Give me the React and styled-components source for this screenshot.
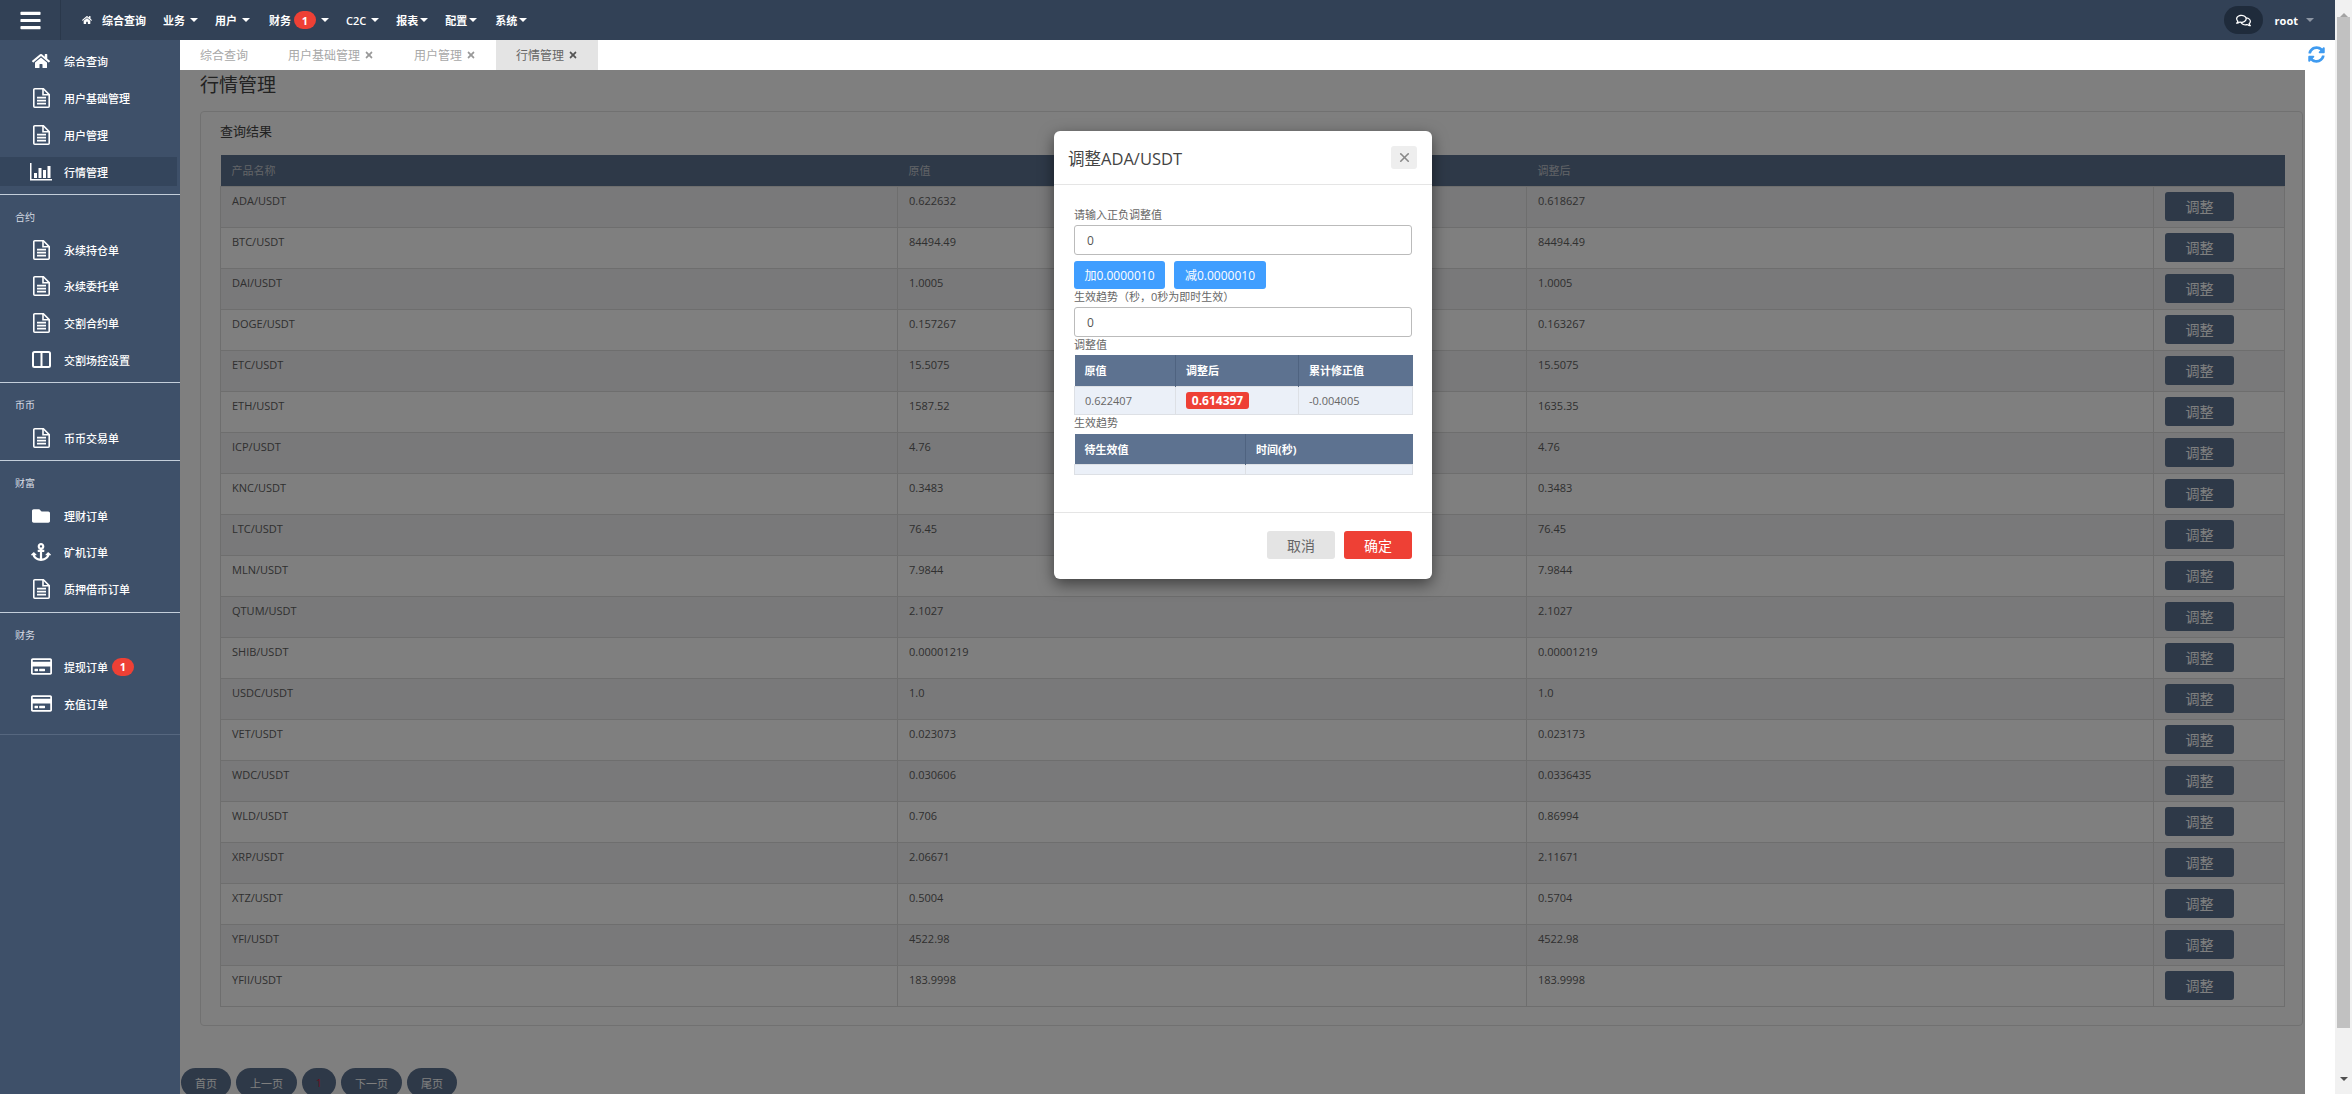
import styled, { createGlobalStyle } from "styled-components";
import { X } from "lucide-react";
import {
  FaAnchor,
  FaBars,
  FaFolder,
  FaHome,
  FaRegComments,
  FaRegCreditCard,
  FaSyncAlt,
  FaTimes,
} from "react-icons/fa";

const FONT = `"Open Sans", "Noto Sans CJK SC", sans-serif`;

const GlobalStyle = createGlobalStyle`
  html, body {
    margin: 0;
    height: 100%;
    overflow: hidden;
    background: #fff;
    font-family: ${FONT};
  }
  * { box-sizing: border-box; }
`;

// file-text outline, wider than the one in the icon package
const FileIcon = () => (
  <svg width="17" height="20" viewBox="0 0 17 20" fill="none" stroke="currentColor" strokeWidth="1.6">
    <path d="M1.8 .8h8.6l5.8 5.8v11.6a1 1 0 0 1-1 1H1.8a1 1 0 0 1-1-1V1.8a1 1 0 0 1 1-1z" />
    <path d="M10 1v5.8h6" />
    <path d="M4 9.6h9M4 12.6h9M4 15.6h9" />
  </svg>
);

const BarsIcon = () => (
  <svg width="22" height="18" viewBox="0 0 22 18" fill="currentColor">
    <path d="M0 0h1.500v16H22v1.500H0z" />
    <path d="M4 10h3v5H4zM8.500 5h3v10h-3zM13 7h3v8h-3zM17.500 3h3v12h-3z" />
  </svg>
);

const ColumnsIcon = () => (
  <svg width="19" height="17" viewBox="0 0 19 17" fill="none" stroke="currentColor" strokeWidth="2">
    <rect x="1" y="1" width="17" height="15" rx="1.500" />
    <path d="M9.500 1v15" />
  </svg>
);

const menuGroups = [
  {
    items: [
      { icon: <FaHome size={18} />, text: "综合查询" },
      { icon: <FileIcon />, text: "用户基础管理" },
      { icon: <FileIcon />, text: "用户管理" },
      { icon: <BarsIcon />, text: "行情管理", active: true },
    ],
  },
  {
    title: "合约",
    items: [
      { icon: <FileIcon />, text: "永续持仓单" },
      { icon: <FileIcon />, text: "永续委托单" },
      { icon: <FileIcon />, text: "交割合约单" },
      { icon: <ColumnsIcon />, text: "交割场控设置" },
    ],
  },
  { title: "币币", items: [{ icon: <FileIcon />, text: "币币交易单" }] },
  {
    title: "财富",
    items: [
      { icon: <FaFolder size={18} />, text: "理财订单" },
      { icon: <FaAnchor size={20} />, text: "矿机订单" },
      { icon: <FileIcon />, text: "质押借币订单" },
    ],
  },
  {
    title: "财务",
    last: true,
    items: [
      { icon: <FaRegCreditCard size={21} />, text: "提现订单", badge: "1" },
      { icon: <FaRegCreditCard size={21} />, text: "充值订单" },
    ],
  },
];

const rows = [
  ["ADA/USDT", "0.622632", "0.618627"],
  ["BTC/USDT", "84494.49", "84494.49"],
  ["DAI/USDT", "1.0005", "1.0005"],
  ["DOGE/USDT", "0.157267", "0.163267"],
  ["ETC/USDT", "15.5075", "15.5075"],
  ["ETH/USDT", "1587.52", "1635.35"],
  ["ICP/USDT", "4.76", "4.76"],
  ["KNC/USDT", "0.3483", "0.3483"],
  ["LTC/USDT", "76.45", "76.45"],
  ["MLN/USDT", "7.9844", "7.9844"],
  ["QTUM/USDT", "2.1027", "2.1027"],
  ["SHIB/USDT", "0.00001219", "0.00001219"],
  ["USDC/USDT", "1.0", "1.0"],
  ["VET/USDT", "0.023073", "0.023173"],
  ["WDC/USDT", "0.030606", "0.0336435"],
  ["WLD/USDT", "0.706", "0.86994"],
  ["XRP/USDT", "2.06671", "2.11671"],
  ["XTZ/USDT", "0.5004", "0.5704"],
  ["YFI/USDT", "4522.98", "4522.98"],
  ["YFII/USDT", "183.9998", "183.9998"],
];

const Page = styled.div`
  display: flex;
  flex-direction: column;
  width: 2352px;
  height: 1094px;
  padding-right: 17px;
  position: relative;
  overflow: hidden;
`;

const Header = styled.header`
  display: flex;
  align-items: center;
  height: 40px;
  flex-shrink: 0;
  background: #324156;
  color: #fff;
`;

const Burger = styled.div`
  display: flex;
  align-items: center;
  justify-content: center;
  width: 61px;
  height: 100%;
  border-right: 1px solid #2a384b;
  font-size: 23px;
`;

const Nav = styled.nav`
  display: flex;
  align-items: center;
  flex: 1;
  padding-left: 21px;
  font-size: 11px;
  font-weight: 600;
`;

const NavItem = styled.span`
  display: flex;
  align-items: center;
  margin-right: ${(p) => p.$space || 17}px;
  white-space: nowrap;
`;

const HomeMark = styled(FaHome)`
  font-size: 10px;
  margin-right: 10px;
`;

const Caret = styled.i`
  width: 0;
  height: 0;
  margin-left: ${(p) => p.$gap || 5}px;
  border-left: 4px solid transparent;
  border-right: 4px solid transparent;
  border-top: 4px solid ${(p) => p.$color || "#fff"};
`;

const Badge = styled.span`
  display: inline-flex;
  align-items: center;
  justify-content: center;
  width: 22px;
  height: 18px;
  margin-left: ${(p) => p.$left || 3}px;
  border-radius: 9px;
  background: #ee4035;
  color: #fff;
  font-size: 11px;
  font-weight: 700;
  position: relative;
`;

const UserArea = styled.div`
  display: flex;
  align-items: center;
  padding-right: 21px;
  font-size: 11px;
  font-weight: 700;
`;

const ChatPill = styled.span`
  display: flex;
  align-items: center;
  justify-content: center;
  width: 39px;
  height: 28px;
  margin-right: 12px;
  border-radius: 14px;
  background: #1f2b3b;
  font-size: 15px;
`;

const Body = styled.div`
  display: flex;
  flex: 1;
  min-height: 0;
`;

const Sidebar = styled.aside`
  width: 180px;
  flex-shrink: 0;
  background: #3e5069;
  color: #fff;
`;

const MenuGroup = styled.div`
  padding-top: ${(p) => (p.$first ? 3 : 0)}px;
  padding-bottom: ${(p) => (p.$last ? 12 : 4)}px;
  border-bottom: 1px solid ${(p) => (p.$last ? "#56677f" : "#c3ceda")};
`;

const GroupTitle = styled.div`
  height: 36px;
  padding: 14px 0 6px 15px;
  font-size: 10px;
  line-height: 16px;
  color: #d5dbe3;
`;

const MenuRow = styled.div`
  display: flex;
  align-items: center;
  height: 36.8px;
  position: relative;
  font-size: 11px;
  font-weight: 500;

  &::before {
    content: "";
    display: ${(p) => (p.$active ? "block" : "none")};
    position: absolute;
    left: 0;
    right: 3px;
    top: 4px;
    bottom: 4px;
    background: #34455c;
  }
`;

const MenuIcon = styled.span`
  display: flex;
  align-items: center;
  justify-content: center;
  width: 64px;
  padding-left: 18px;
  position: relative;
`;

const MenuText = styled.span`
  position: relative;
`;

const Main = styled.main`
  display: flex;
  flex-direction: column;
  flex: 1;
  min-width: 0;
`;

const TabBar = styled.div`
  display: flex;
  height: 30px;
  flex-shrink: 0;
  background: #fff;
  position: relative;
`;

const Tab = styled.div`
  display: flex;
  align-items: center;
  gap: 4px;
  padding: 0 20px;
  font-size: 12px;
  color: ${(p) => (p.$active ? "#666" : "#a8a8a8")};
  background: ${(p) => (p.$active ? "#e4e4e4" : "#fff")};
`;

const TabClose = styled(FaTimes)`
  font-size: 10px;
  color: ${(p) => (p.$active ? "#555" : "#999")};
`;

const Refresh = styled(FaSyncAlt)`
  position: absolute;
  right: 10px;
  top: 6px;
  font-size: 17px;
  color: #3f9bf0;
`;

const Workspace = styled.div`
  flex: 1;
  display: flex;
  min-height: 0;
`;

const Content = styled.section`
  flex: 1;
  min-width: 0;
  position: relative;
  overflow: hidden;
  padding: 0 2px 0 20px;
  background: #fff;
`;

const RightGutter = styled.div`
  width: 30px;
  flex-shrink: 0;
  background: #fff;
`;

const PageTitle = styled.h1`
  margin: 0;
  height: 41px;
  padding-top: 1px;
  font-size: 19px;
  font-weight: 400;
  line-height: 28px;
  color: #444;
`;

const Panel = styled.div`
  height: 915px;
  padding: 0 19px;
  border: 1px solid #e2e2e2;
  border-radius: 4px;
`;

const PanelTitle = styled.div`
  height: 43px;
  padding-top: 10px;
  font-size: 13px;
  line-height: 18px;
  color: #444;
`;

const DataTable = styled.table`
  width: 2064px;
  table-layout: fixed;
  border-collapse: collapse;
  font-size: 11px;
`;

const DataHead = styled.th`
  height: 31px;
  padding: 0 11px;
  text-align: left;
  font-weight: 400;
  color: #c4c8cf;
  background: #5d7290;
`;

const DataRow = styled.tr`
  background: ${(p) => (p.$odd ? "#f2f2f4" : "#ffffff")};
`;

const DataCell = styled.td`
  height: 41px;
  padding: 6px 11px 0;
  vertical-align: top;
  line-height: 15px;
  color: #606060;
  border: 1px solid #dcdcdc;
`;

const ActionCell = styled(DataCell)`
  padding: 5px 0 0 11px;
`;

const AdjustButton = styled.button`
  display: block;
  width: 69px;
  height: 29px;
  padding: 0;
  border: 0;
  border-radius: 3px;
  background: #5d7290;
  color: #fff;
  font: 14px ${FONT};
`;

const Pager = styled.div`
  display: flex;
  gap: 5px;
  margin: 42px 0 0 -19px;
`;

const PagerButton = styled.button`
  width: ${(p) => p.$w}px;
  height: 29px;
  padding: 0;
  border: 0;
  border-radius: 15px;
  background: #5d7290;
  color: ${(p) => (p.$current ? "#c81e3c" : "#fff")};
  font: 11px ${FONT};
`;

const Backdrop = styled.div`
  position: absolute;
  left: 180px;
  top: 70px;
  width: 2125px;
  height: 1024px;
  background: rgba(0, 0, 0, 0.5);
`;

const Modal = styled.div`
  position: absolute;
  left: 1054px;
  top: 131px;
  width: 378px;
  height: 448px;
  display: flex;
  flex-direction: column;
  border-radius: 6px;
  background: #fff;
  box-shadow: 0 5px 15px rgba(0, 0, 0, 0.5);
`;

const ModalHeader = styled.div`
  display: flex;
  align-items: center;
  justify-content: space-between;
  height: 54px;
  flex-shrink: 0;
  padding: 0 15px 0 14px;
  border-bottom: 1px solid #e5e5e5;
`;

const ModalTitle = styled.h4`
  margin: 0;
  font-size: 16.5px;
  font-weight: 400;
  color: #444;
`;

const CloseButton = styled.button`
  display: flex;
  align-items: center;
  justify-content: center;
  width: 26px;
  height: 23px;
  padding: 0;
  border: 0;
  border-radius: 3px;
  background: #eee;
  color: #888;
`;

const ModalBody = styled.div`
  height: 328px;
  flex-shrink: 0;
  padding: 22px 20px 0;
  border-bottom: 1px solid #e5e5e5;
`;

const FieldLabel = styled.div`
  height: ${(p) => p.$h || 18}px;
  font-size: 11px;
  line-height: 16px;
  color: #666;
`;

const ValueInput = styled.input`
  display: block;
  width: 100%;
  height: 30px;
  padding: 0 12px;
  border: 1px solid #bbb;
  border-radius: 3px;
  color: #555;
  background: #fff;
  font: 12px ${FONT};
`;

const StepRow = styled.div`
  display: flex;
  gap: 9px;
  margin-top: 6px;
`;

const StepButton = styled.button`
  width: ${(p) => p.$w}px;
  height: 28px;
  padding: 0;
  border: 0;
  border-radius: 3px;
  background: #409eff;
  color: #fff;
  font: 12px ${FONT};
`;

const MiniTable = styled.table`
  width: 338px;
  table-layout: fixed;
  border-collapse: collapse;
  font-size: 11px;
`;

const MiniHead = styled.th`
  height: 31px;
  padding: 0 10px;
  text-align: left;
  font-weight: 700;
  color: #fff;
  background: #5d7290;
  border-left: 1px solid #4f6380;

  &:first-child {
    border-left: 0;
  }
`;

const MiniCell = styled.td`
  height: ${(p) => p.$h}px;
  padding: 0 10px;
  color: #666;
  background: #ebf0f8;
  border: 1px solid #dde0e5;
`;

const RedTag = styled.span`
  display: inline-block;
  width: 63px;
  height: 17px;
  line-height: 17px;
  text-align: center;
  border-radius: 3px;
  background: #ee4035;
  color: #fff;
  font-size: 12px;
  font-weight: 700;
`;

const ModalFooter = styled.div`
  display: flex;
  justify-content: flex-end;
  gap: 9px;
  padding: 18px 20px 0;
`;

const FooterButton = styled.button`
  width: 68px;
  height: 28px;
  padding: 0;
  border: 0;
  border-radius: 3px;
  background: ${(p) => (p.$primary ? "#ee4035" : "#e4e4e4")};
  color: ${(p) => (p.$primary ? "#fff" : "#666")};
  font: 14px ${FONT};
`;

const Scrollbar = styled.div`
  position: absolute;
  right: 0;
  top: 0;
  bottom: 0;
  width: 17px;
  display: flex;
  flex-direction: column;
  align-items: center;
  background: #f1f1f1;
`;

const ScrollArrow = styled.i`
  height: 17px;
  width: 0;
  flex-shrink: 0;
  border-left: 4px solid transparent;
  border-right: 4px solid transparent;
  border-bottom: 4px solid ${(p) => (p.$down ? "transparent" : "#a3a3a3")};
  border-top: 4px solid ${(p) => (p.$down ? "#505050" : "transparent")};
  margin-top: ${(p) => (p.$down ? "auto" : 0)};
  background-clip: padding-box;
`;

const ScrollThumb = styled.div`
  width: 13px;
  height: 1011px;
  background: #c1c1c1;
`;

const App = () => {
  return (
    <Page>
      <GlobalStyle />
      <Header>
        <Burger>
          <FaBars />
        </Burger>
        <Nav>
          <NavItem>
            <HomeMark />
            综合查询
          </NavItem>
          <NavItem>
            业务
            <Caret />
          </NavItem>
          <NavItem $space={19}>
            用户
            <Caret />
          </NavItem>
          <NavItem>
            财务
            <Badge>1</Badge>
            <Caret />
          </NavItem>
          <NavItem>
            C2C
            <Caret />
          </NavItem>
          <NavItem>
            报表
            <Caret $gap={2} />
          </NavItem>
          <NavItem $space={18}>
            配置
            <Caret $gap={2} />
          </NavItem>
          <NavItem>
            系统
            <Caret $gap={2} />
          </NavItem>
        </Nav>
        <UserArea>
          <ChatPill>
            <FaRegComments />
          </ChatPill>
          root
          <Caret $color="#8d96a3" $gap={8} />
        </UserArea>
      </Header>
      <Body>
        <Sidebar>
          {menuGroups.map((group, i) => (
            <MenuGroup key={i} $first={i === 0} $last={group.last}>
              {group.title && <GroupTitle>{group.title}</GroupTitle>}
              {group.items.map((item) => (
                <MenuRow key={item.text} $active={item.active}>
                  <MenuIcon>{item.icon}</MenuIcon>
                  <MenuText>{item.text}</MenuText>
                  {item.badge && <Badge $left={4}>{item.badge}</Badge>}
                </MenuRow>
              ))}
            </MenuGroup>
          ))}
        </Sidebar>
        <Main>
          <TabBar>
            <Tab>综合查询</Tab>
            <Tab>
              用户基础管理
              <TabClose />
            </Tab>
            <Tab>
              用户管理
              <TabClose />
            </Tab>
            <Tab $active>
              行情管理
              <TabClose $active />
            </Tab>
            <Refresh />
          </TabBar>
          <Workspace>
            <Content>
              <PageTitle>行情管理</PageTitle>
              <Panel>
                <PanelTitle>查询结果</PanelTitle>
                <DataTable>
                  <colgroup>
                    <col width="677" />
                    <col width="629" />
                    <col width="627" />
                    <col width="131" />
                  </colgroup>
                  <thead>
                    <tr>
                      <DataHead>产品名称</DataHead>
                      <DataHead>原值</DataHead>
                      <DataHead>调整后</DataHead>
                      <DataHead />
                    </tr>
                  </thead>
                  <tbody>
                    {rows.map((row, i) => (
                      <DataRow key={row[0]} $odd={i % 2 === 0}>
                        <DataCell>{row[0]}</DataCell>
                        <DataCell>{row[1]}</DataCell>
                        <DataCell>{row[2]}</DataCell>
                        <ActionCell>
                          <AdjustButton>调整</AdjustButton>
                        </ActionCell>
                      </DataRow>
                    ))}
                  </tbody>
                </DataTable>
              </Panel>
              <Pager>
                <PagerButton $w={50}>首页</PagerButton>
                <PagerButton $w={61}>上一页</PagerButton>
                <PagerButton $w={34} $current>
                  1
                </PagerButton>
                <PagerButton $w={61}>下一页</PagerButton>
                <PagerButton $w={50}>尾页</PagerButton>
              </Pager>
            </Content>
            <RightGutter />
          </Workspace>
        </Main>
      </Body>
      <Backdrop />
      <Modal>
        <ModalHeader>
          <ModalTitle>调整ADA/USDT</ModalTitle>
          <CloseButton>
            <X size={15} strokeWidth={2.6} />
          </CloseButton>
        </ModalHeader>
        <ModalBody>
          <FieldLabel>请输入正负调整值</FieldLabel>
          <ValueInput defaultValue="0" />
          <StepRow>
            <StepButton $w={91}>加0.0000010</StepButton>
            <StepButton $w={92}>减0.0000010</StepButton>
          </StepRow>
          <FieldLabel>生效趋势（秒，0秒为即时生效）</FieldLabel>
          <ValueInput defaultValue="0" />
          <FieldLabel $h={18}>调整值</FieldLabel>
          <MiniTable>
            <colgroup>
              <col width="101" />
              <col width="123" />
              <col width="114" />
            </colgroup>
            <thead>
              <tr>
                <MiniHead>原值</MiniHead>
                <MiniHead>调整后</MiniHead>
                <MiniHead>累计修正值</MiniHead>
              </tr>
            </thead>
            <tbody>
              <tr>
                <MiniCell $h={28}>0.622407</MiniCell>
                <MiniCell $h={28}>
                  <RedTag>0.614397</RedTag>
                </MiniCell>
                <MiniCell $h={28}>-0.004005</MiniCell>
              </tr>
            </tbody>
          </MiniTable>
          <FieldLabel $h={19}>生效趋势</FieldLabel>
          <MiniTable>
            <colgroup>
              <col width="171" />
              <col width="167" />
            </colgroup>
            <thead>
              <tr>
                <MiniHead>待生效值</MiniHead>
                <MiniHead>时间(秒)</MiniHead>
              </tr>
            </thead>
            <tbody>
              <tr>
                <MiniCell $h={10} />
                <MiniCell $h={10} />
              </tr>
            </tbody>
          </MiniTable>
        </ModalBody>
        <ModalFooter>
          <FooterButton>取消</FooterButton>
          <FooterButton $primary>确定</FooterButton>
        </ModalFooter>
      </Modal>
      <Scrollbar>
        <ScrollArrow />
        <ScrollThumb />
        <ScrollArrow $down />
      </Scrollbar>
    </Page>
  );
};

export default App;
